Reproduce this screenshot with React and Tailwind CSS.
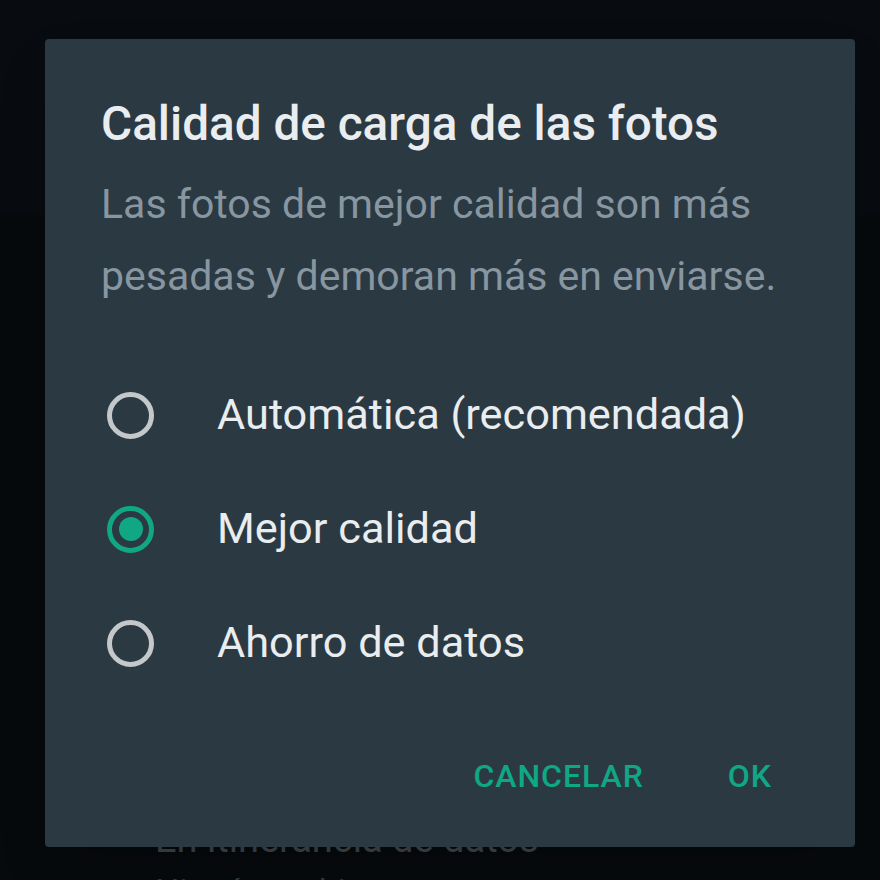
import React, { useState } from 'react';

const options = [
    { id: 'auto', label: 'Automática (recomendada)' },
    { id: 'best', label: 'Mejor calidad' },
    { id: 'saver', label: 'Ahorro de datos' },
];

function Radio({ checked }) {
    return (
        <div
            className={
                checked
                    ? 'w-[47px] h-[47px] rounded-full border-[5px] border-[#10a884] flex items-center justify-center shrink-0'
                    : 'w-[47px] h-[47px] rounded-full border-[5px] border-[#c5c8cb] flex items-center justify-center shrink-0'
            }
        >
            {checked && <div className="w-[24px] h-[24px] rounded-full bg-[#10a884]" />}
        </div>
    );
}

export default function App() {
    const [selected, setSelected] = useState('best');

    return (
        <div className="relative w-[880px] h-[880px] overflow-hidden bg-[#070a0d] font-['Roboto','Liberation_Sans',sans-serif]">
            {/* Settings list behind the dialog */}
            <div className="h-[215px] bg-[#080b0f]" />
            <div className="pl-[155px] pt-[601px]">
                <p className="text-[38px] leading-[46px] text-[#3f4549]">En itinerancia de datos</p>
                <p className="text-[34px] leading-[46px] text-[#34393d] mt-[6px]">Ningún archivo</p>
            </div>

            {/* Dialog */}
            <div className="absolute left-[45px] top-[39px] w-[810px] h-[808px] rounded-[4px] bg-[#2b3942] shadow-2xl pt-[57px] px-[56px]">
                <h1 className="text-[47.7px] leading-[56px] font-medium text-[#e9edef]">
                    Calidad de carga de las fotos
                </h1>
                <p className="mt-[16px] text-[41px] leading-[72px] text-[#8796a0]">
                    Las fotos de mejor calidad son más pesadas y demoran más en enviarse.
                </p>

                <div className="mt-[46px]">
                    {options.map((opt) => (
                        <button
                            key={opt.id}
                            onClick={() => setSelected(opt.id)}
                            className="w-full h-[114px] flex items-center text-left"
                        >
                            <div className="ml-[6px]">
                                <Radio checked={selected === opt.id} />
                            </div>
                            <span className="ml-[63px] text-[43.3px] leading-[52px] text-[#e9edef]">
                                {opt.label}
                            </span>
                        </button>
                    ))}
                </div>

                <div className="mt-[56px] flex justify-end gap-[84px] pr-[27px]">
                    <button className="text-[32px] leading-[40px] font-medium tracking-[0.03em] text-[#10a884]">CANCELAR</button>
                    <button className="text-[32px] leading-[40px] font-medium tracking-[0.03em] text-[#10a884]">OK</button>
                </div>
            </div>
        </div>
    );
}
